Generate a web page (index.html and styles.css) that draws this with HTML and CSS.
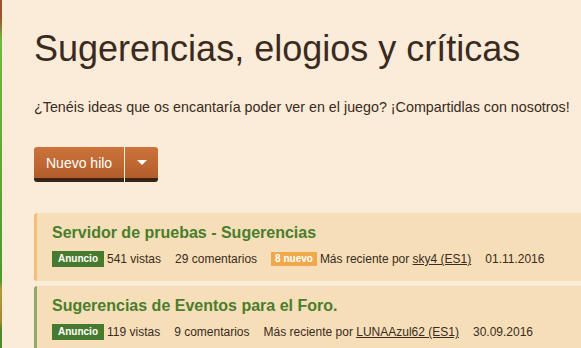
FILE: index.html
```html
<!DOCTYPE html>
<html>
<head>
<meta charset="utf-8">
<title>Sugerencias, elogios y críticas</title>
<link rel="stylesheet" href="styles.css">
</head>
<body>
<div class="side_bar"></div>
<div class="main">
<h1 class="brd_ttl">Sugerencias, elogios y críticas</h1>
<p class="brd_dsc">¿Tenéis ideas que os encantaría poder ver en el juego? ¡Compartidlas con nosotros!</p>

<div class="btn_grp">
<span class="btn btn_main">Nuevo hilo</span><span class="btn btn_drop"><span class="caret"></span></span>
</div>

<div class="thr_lst">
<div class="thr thr_new">
<div class="thr_ttl">Servidor de pruebas - Sugerencias</div>
<div class="thr_meta">
<span class="tag tag_ann">Anuncio</span><span class="m">541 vistas</span><span class="m">29 comentarios</span><span class="tag tag_new">8 nuevo</span><span class="m">Más reciente por <a href="#">sky4 (ES1)</a></span><span class="m">01.11.2016</span>
</div>
</div>
<div class="thr thr_old">
<div class="thr_ttl">Sugerencias de Eventos para el Foro.</div>
<div class="thr_meta">
<span class="tag tag_ann">Anuncio</span><span class="m">119 vistas</span><span class="m">9 comentarios</span><span class="m">Más reciente por <a href="#">LUNAAzul62 (ES1)</a></span><span class="m">30.09.2016</span>
</div>
</div>
</div>
</div>
</body>
</html>
```

FILE: styles.css
```css
html, body {margin:0;padding:0;}
body {background:#faecd8;font-family:"Liberation Sans", Arial, sans-serif;color:#3a2a20;display:flex;height:348px;overflow:hidden;}

.side_bar {width:2px;flex:none;background:linear-gradient(#a0522d 0, #a0522d 18px, #6dbb3a 40px, #4c9a2a 280px, #b49a3a 290px, #a88a30 320px, #4a8a2a 330px);}

.main {flex:1;padding:0 0 0 32px;min-width:0;}

.brd_ttl {font-size:36px;font-weight:normal;margin:28px 0 0;line-height:42px;color:#3b2a1f;}
.brd_dsc {font-size:14.3px;margin:28px 0 0;line-height:18px;white-space:nowrap;}

.btn_grp {display:flex;margin:31px 0 0;}
.btn {display:block;height:31px;line-height:32px;color:#fff;font-size:14px;background:linear-gradient(#cd733c, #b25e2a);border-bottom:4px solid #3a2416;border-radius:3px;}
.btn_main {padding:0 12px;border-top-right-radius:0;border-bottom-right-radius:0;}
.btn_drop {width:33px;margin-left:1px;border-top-left-radius:0;border-bottom-left-radius:0;display:flex;align-items:center;justify-content:center;}
.caret {width:0;height:0;border-left:5px solid transparent;border-right:5px solid transparent;border-top:5px solid #fff;}

.thr_lst {margin-top:31px;}
.thr {background:#f6dfb8;border-left:3px solid #f5bd77;border-radius:3px 0 0 3px;padding:10px 0 13px 15px;margin-bottom:5px;white-space:nowrap;}
.thr_old {border-left-color:#93a66b;}
.thr_ttl {font-size:16px;font-weight:bold;color:#4a7d2c;line-height:20px;}
.thr_meta {margin-top:7px;font-size:12px;line-height:18px;display:flex;align-items:center;color:#3a2a20;}
.thr_meta .m {margin-right:14px;}
.thr_meta a {color:#3a2a20;}
.tag {display:inline-block;font-size:10px;font-weight:bold;color:#fff;padding:0 6px;line-height:16px;margin-right:3px;}
.tag_ann {background:#477a2e;}
.tag_new {background:#efa84a;line-height:14px;padding:0 4px;}
```
